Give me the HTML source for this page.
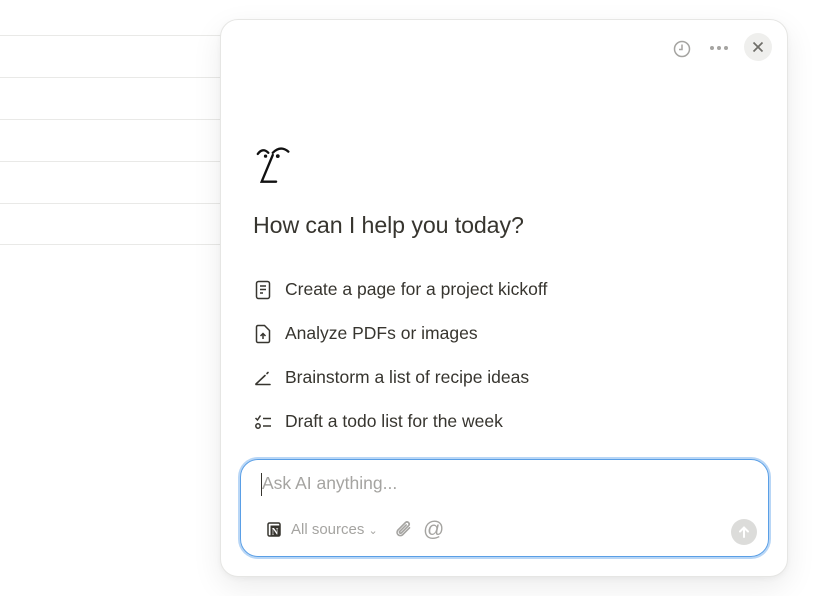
<!DOCTYPE html>
<html><head><meta charset="utf-8"><style>
*{margin:0;padding:0;box-sizing:border-box}
html,body{width:825px;height:596px;overflow:hidden;background:#fff;font-family:"Liberation Sans",sans-serif;color:#37352f}
.line{position:absolute;left:0;width:230px;height:1px;background:#e9e9e7}
.panel{position:absolute;left:220px;top:19px;width:568px;height:558px;background:#fff;border:1px solid #e6e6e4;border-radius:18px;box-shadow:0 10px 30px rgba(0,0,0,.08),0 2px 6px rgba(0,0,0,.04)}
.abs{position:absolute}
.h{left:32px;top:192px;font-size:23.2px;color:#37352f;letter-spacing:-0.1px}
.item{position:absolute;left:33px;font-size:17.5px;color:#37352f;display:flex;align-items:center}
.item svg{margin-right:13px}
.input{position:absolute;left:19px;top:439px;width:529px;height:98px;border:1px solid #5a9fe6;border-radius:18px;box-shadow:0 0 0 2px #b8d6f6}
</style></head><body>
<div class="line" style="top:35px"></div>
<div class="line" style="top:77px"></div>
<div class="line" style="top:119px"></div>
<div class="line" style="top:161px"></div>
<div class="line" style="top:203px"></div>
<div class="line" style="top:244px"></div>
<div class="panel">
 <svg class="abs" style="left:451px;top:19px" width="20" height="20" viewBox="0 0 20 20" fill="none" stroke="#a5a4a1" stroke-width="1.5"><circle cx="10" cy="10" r="7.5"/><path d="M10 5.5V10.5H7"/></svg>
 <svg class="abs" style="left:488px;top:24px" width="20" height="8" viewBox="0 0 20 8" fill="#a5a4a1"><circle cx="3" cy="4" r="2"/><circle cx="10" cy="4" r="2"/><circle cx="17" cy="4" r="2"/></svg>
 <div class="abs" style="left:523px;top:13px;width:28px;height:28px;border-radius:14px;background:#efefed"></div>
 <svg class="abs" style="left:531px;top:21px" width="12" height="12" viewBox="0 0 12 12" stroke="#6f6e69" stroke-width="1.7"><path d="M1.5 1.5L10.5 10.5M10.5 1.5L1.5 10.5"/></svg>
 <svg class="abs" style="left:34px;top:125px" width="40" height="40" viewBox="0 0 36 36" fill="none" stroke="#111" stroke-width="2.1" stroke-linecap="round"><path d="M2.5 8Q7 2 12 7"/><path d="M16 7Q23 0 30 6"/><circle cx="9.5" cy="10" r="1.5" fill="#111" stroke="none"/><circle cx="20.5" cy="10" r="1.7" fill="#111" stroke="none"/><path d="M16 9L6 33H19"/></svg>
 <div class="abs h">How can I help you today?</div>
 <div class="item" style="top:259px"><svg width="18" height="20" viewBox="0 0 18 20" fill="none" stroke="#37352f" stroke-width="1.5"><rect x="2.5" y="1.5" width="13" height="17" rx="2"/><path d="M6 6H12M6 9.5H12M6 13H9"/></svg>Create a page for a project kickoff</div>
 <div class="item" style="top:303px"><svg width="18" height="20" viewBox="0 0 18 20" fill="none" stroke="#37352f" stroke-width="1.5"><path d="M3.5 1.5H10.5L15.5 6.5V17A1.5 1.5 0 0 1 14 18.5H4A1.5 1.5 0 0 1 2.5 17V3A1.5 1.5 0 0 1 4 1.5Z"/><path d="M9 15V9.5M6.5 12L9 9.5L11.5 12"/></svg>Analyze PDFs or images</div>
 <div class="item" style="top:347px"><svg width="18" height="20" viewBox="0 0 18 20" fill="none" stroke="#37352f" stroke-width="1.6" stroke-linecap="round"><path d="M2 16L11 7.5"/><path d="M13 5.5L14 4.5"/><path d="M2 16.5H16"/></svg>Brainstorm a list of recipe ideas</div>
 <div class="item" style="top:391px"><svg width="18" height="20" viewBox="0 0 18 20" fill="none" stroke="#37352f" stroke-width="1.5"><path d="M1.5 6L3.5 8L6.5 3.5"/><circle cx="4" cy="14" r="2.2"/><path d="M9 6.5H17M9 14H17"/></svg>Draft a todo list for the week</div>
 <div class="input">
  <div class="abs" style="left:20px;top:13px;width:1px;height:23px;background:#37352f"></div>
  <div class="abs" style="left:21px;top:13px;font-size:17.5px;color:#a5a4a1">Ask AI anything...</div>
  <svg class="abs" style="left:26px;top:62px" width="15" height="15" viewBox="0 0 15 15"><rect x="1" y="1" width="12" height="13" rx="1.5" fill="#fff" stroke="#37352f" stroke-width="1.5"/><rect x="3.5" y="3.5" width="9" height="10" fill="#37352f"/><text x="8" y="12.5" font-size="9" font-family="Liberation Serif" font-weight="bold" fill="#fff" text-anchor="middle">N</text></svg>
  <div class="abs" style="left:50px;top:61px;font-size:15px;color:#a5a4a1">All sources <span style="font-size:11px">&#8964;</span></div>
  <svg class="abs" style="left:152px;top:59px" width="22" height="22" viewBox="0 0 20 20" fill="none" stroke="#a5a4a1" stroke-width="1.5" stroke-linecap="round"><path d="M15 8L8.5 14.5A3 3 0 0 1 4.3 10.3L11.5 3.1A2 2 0 0 1 14.3 5.9L7.5 12.7A1 1 0 0 1 6.1 11.3L12 5.4"/></svg>
  <div class="abs" style="left:182px;top:58px;font-size:21px;color:#a5a4a1">@</div>
  <div class="abs" style="left:490px;top:59px;width:26px;height:26px;border-radius:13px;background:#dcdcda"></div>
  <svg class="abs" style="left:496px;top:65px" width="14" height="14" viewBox="0 0 14 14" fill="none" stroke="#fff" stroke-width="2" stroke-linecap="round"><path d="M7 12V2.5M3 6.5L7 2.5L11 6.5"/></svg>
 </div>
</div>
</body></html>
